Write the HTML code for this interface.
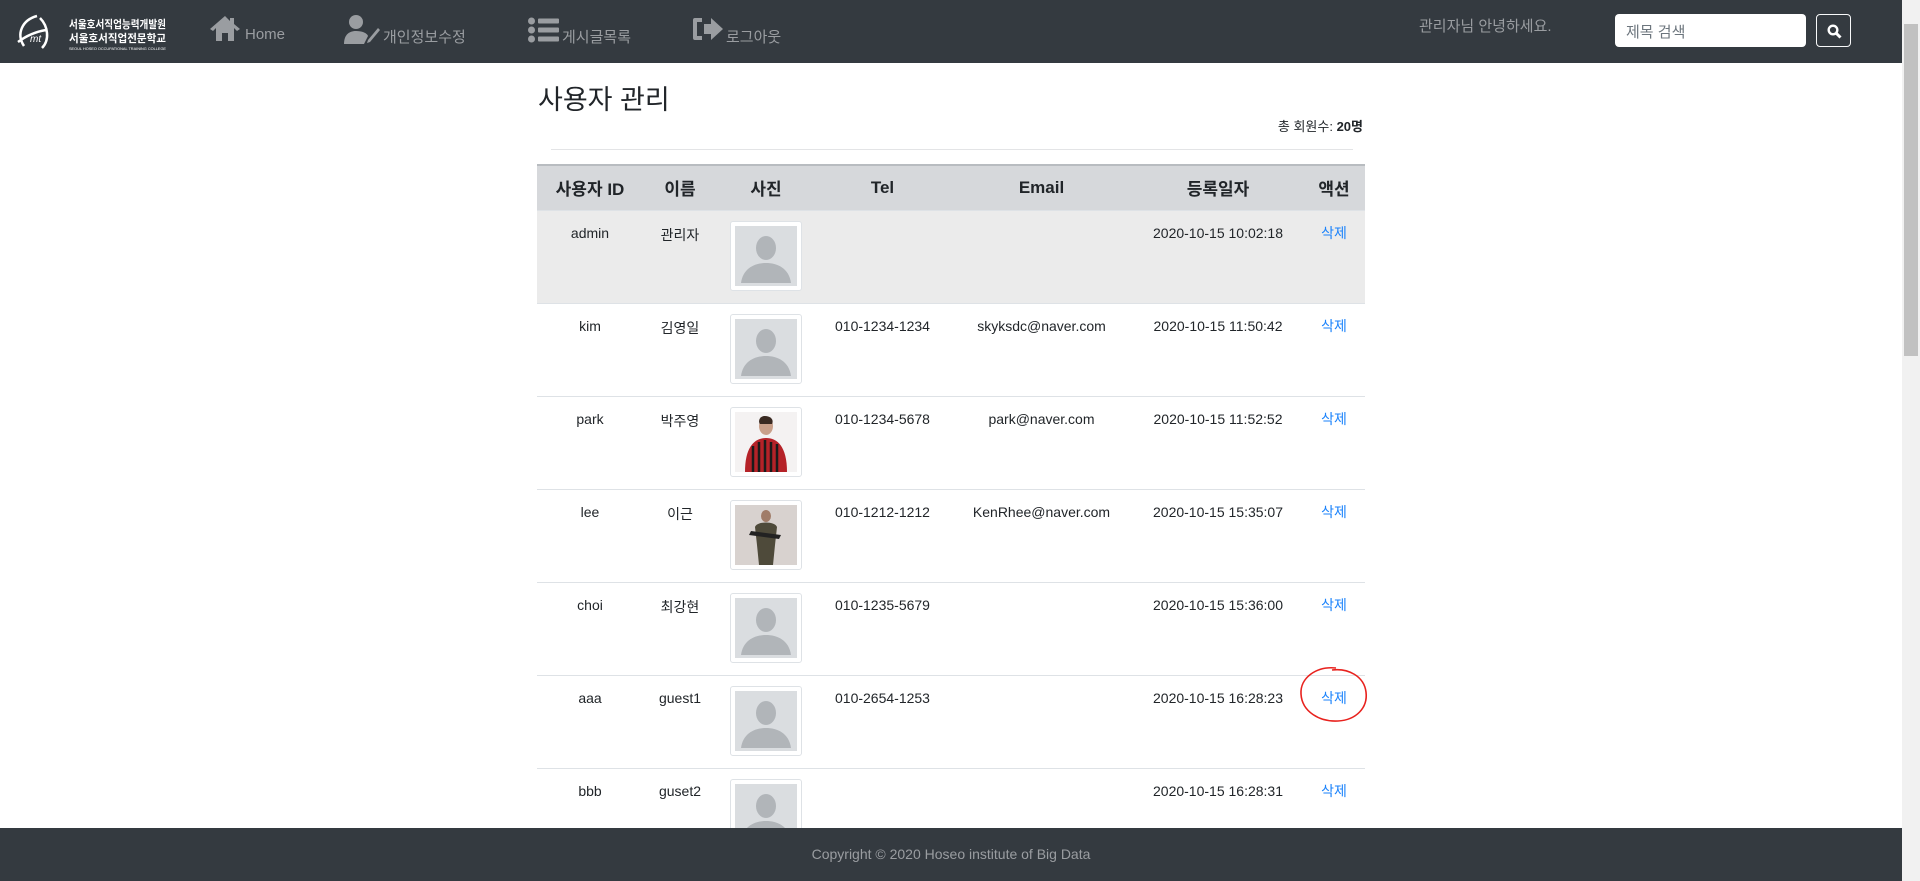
<!DOCTYPE html>
<html><head><meta charset="utf-8"><style>
*{margin:0;padding:0;box-sizing:border-box}
body{width:1920px;height:881px;overflow:hidden;background:#fff;font-family:"Liberation Sans","Noto Sans CJK KR",sans-serif;position:relative;color:#212529}
.nav{position:absolute;left:0;top:0;width:1902px;height:63px;background:#343a40}
.nt{position:absolute;color:#9a9da1;font-size:15px;top:26px}
.ic{position:absolute;fill:#9a9da1}
.scroll{position:absolute;right:0;top:0;width:18px;height:881px;background:#f1f1f1}
.thumb{position:absolute;right:2px;top:24px;width:14px;height:332px;background:#c1c1c1}
table{position:absolute;left:537px;top:164px;border-collapse:collapse;width:828px;font-size:14px}
th{height:45px;background:#d6d8db;border-top:2px solid #b8bcc0;font-size:17px;font-weight:bold;text-align:center}
td{height:93px;border-top:1px solid #dee2e6;text-align:center;vertical-align:top;padding-top:14px}
tr.act td{background:#ebebeb}
.del{color:#1a82fb;padding-top:12px}
.ph{display:inline-block;width:72px;height:70px;border:1px solid #dee2e6;border-radius:3px;background:#fff;padding:4px;margin-top:-4px}
.ph svg{display:block;width:62px;height:60px}
.foot{position:absolute;left:0;top:828px;width:1902px;height:53px;background:#343a40;color:#9a9da1;font-size:14px;text-align:center;line-height:53px}
</style></head><body>
<div class="nav">
 <svg style="position:absolute;left:12px;top:12px" width="155" height="40" viewBox="0 0 155 40">
  <path d="M25 4 C10 8 4 22 12 34 M28 6 C36 14 38 28 30 36 M6 30 C14 24 22 20 34 18" stroke="#fff" stroke-width="2.5" fill="none"/>
  <text x="18" y="30" fill="#fff" font-size="10" font-style="italic">mt</text>
  <text x="57" y="16" fill="#fff" font-size="11" font-weight="bold" font-family="Noto Sans CJK KR" textLength="97" lengthAdjust="spacingAndGlyphs">서울호서직업능력개발원</text>
  <text x="57" y="30" fill="#fff" font-size="11" font-weight="bold" font-family="Noto Sans CJK KR" textLength="97" lengthAdjust="spacingAndGlyphs">서울호서직업전문학교</text>
  <text x="57" y="38" fill="#fff" font-size="4" textLength="97" lengthAdjust="spacingAndGlyphs">SEOUL HOSEO OCCUPATIONAL TRAINING COLLEGE</text>
 </svg>
 <svg class="ic" style="left:208px;top:14px" width="34" height="28" viewBox="0 0 34 28"><path d="M17 2 L2 15 L5 17 L8 14 V27 H14 V19 H20 V27 H26 V14 L29 17 L32 15 L26 10 V4 H22 V7 Z"/></svg>
 <div class="nt" style="left:245px">Home</div>
 <svg class="ic" style="left:342px;top:14px" width="40" height="32" viewBox="0 0 40 32"><circle cx="14" cy="8" r="7"/><path d="M2 30 C2 20 8 17 14 17 C20 17 25 19 26 22 L22 30Z"/><path d="M26 26 L36 14 L38 16 L28 28 L25 29Z"/></svg>
 <div class="nt" style="left:383px">개인정보수정</div>
 <svg class="ic" style="left:528px;top:17px" width="32" height="26" viewBox="0 0 32 26"><circle cx="3.5" cy="4" r="3.5"/><circle cx="3.5" cy="13" r="3.5"/><circle cx="3.5" cy="22" r="3.5"/><rect x="10" y="1.5" width="21" height="5" rx="1"/><rect x="10" y="10.5" width="21" height="5" rx="1"/><rect x="10" y="19.5" width="21" height="5" rx="1"/></svg>
 <div class="nt" style="left:562px">게시글목록</div>
 <svg class="ic" style="left:692px;top:16px" width="32" height="26" viewBox="0 0 32 26"><path d="M10 2 H3 Q1 2 1 4 V22 Q1 24 3 24 H10 V20 H5 V6 H10Z"/><path d="M12 8 H19 V2 L31 13 L19 24 V18 H12Z"/></svg>
 <div class="nt" style="left:726px">로그아웃</div>
 <div class="nt" style="left:1419px;top:15px">관리자님 안녕하세요.</div>
 <div style="position:absolute;left:1615px;top:14px;width:191px;height:33px;background:#fff;border-radius:4px;color:#6c757d;font-size:15px;padding:7px 11px">제목 검색</div>
 <div style="position:absolute;left:1816px;top:14px;width:35px;height:33px;border:1px solid #f8f9fa;border-radius:4px"><svg style="position:absolute;left:10px;top:9px" width="15" height="15" viewBox="0 0 15 15"><circle cx="6" cy="6" r="4.3" stroke="#fff" stroke-width="2.4" fill="none"/><path d="M9 9 L13.5 13.5" stroke="#fff" stroke-width="3"/></svg></div>
</div>
<div class="scroll"><div class="thumb"></div></div>
<div style="position:absolute;left:538px;top:78px;font-size:27px">사용자 관리</div>
<div style="position:absolute;right:557px;top:116px;font-size:13px">총 회원수: <b>20명</b></div>
<div style="position:absolute;left:551px;top:149px;width:802px;height:1px;background:#e3e4e6"></div>
<table>
<colgroup><col style="width:106px"><col style="width:74px"><col style="width:98px"><col style="width:135px"><col style="width:183px"><col style="width:170px"><col style="width:62px"></colgroup>
<tr><th>사용자 ID</th><th>이름</th><th>사진</th><th>Tel</th><th>Email</th><th>등록일자</th><th>액션</th></tr>
<tr class="act"><td>admin</td><td>관리자</td><td><span class="ph"><svg viewBox="0 0 62 60"><rect width="62" height="60" fill="#dadde0"/><ellipse cx="31" cy="22" rx="10" ry="12" fill="#b1b5b9"/><path d="M6 57 C8 42 20 37 31 37 C42 37 54 42 56 57Z" fill="#b1b5b9"/></svg></span></td><td></td><td></td><td>2020-10-15 10:02:18</td><td class="del">삭제</td></tr>
<tr><td>kim</td><td>김영일</td><td><span class="ph"><svg viewBox="0 0 62 60"><rect width="62" height="60" fill="#dadde0"/><ellipse cx="31" cy="22" rx="10" ry="12" fill="#b1b5b9"/><path d="M6 57 C8 42 20 37 31 37 C42 37 54 42 56 57Z" fill="#b1b5b9"/></svg></span></td><td>010-1234-1234</td><td>skyksdc@naver.com</td><td>2020-10-15 11:50:42</td><td class="del">삭제</td></tr>
<tr><td>park</td><td>박주영</td><td><span class="ph"><svg viewBox="0 0 62 60"><rect width="62" height="60" fill="#f4f2f2"/><ellipse cx="31" cy="14" rx="7" ry="9" fill="#c9a08a"/><path d="M30 4 C24 4 23 10 25 12 L37 12 C39 8 36 4 30 4Z" fill="#3a2a22"/><path d="M10 60 C10 34 20 26 31 26 C42 26 52 34 52 60Z" fill="#b52228"/><path d="M18 34 V60 M24 30 V60 M30 28 V60 M36 30 V60 M42 32 V60" stroke="#1b1b1b" stroke-width="2.5"/></svg></span></td><td>010-1234-5678</td><td>park@naver.com</td><td>2020-10-15 11:52:52</td><td class="del">삭제</td></tr>
<tr><td>lee</td><td>이근</td><td><span class="ph"><svg viewBox="0 0 62 60"><rect width="62" height="60" fill="#d8d2cf"/><ellipse cx="31" cy="11" rx="5" ry="6" fill="#a07c68"/><path d="M20 22 C22 16 40 16 42 22 L40 40 L38 60 H24 L22 40Z" fill="#4e4a3a"/><path d="M16 26 L46 30 L44 34 L14 30Z" fill="#222"/></svg></span></td><td>010-1212-1212</td><td>KenRhee@naver.com</td><td>2020-10-15 15:35:07</td><td class="del">삭제</td></tr>
<tr><td>choi</td><td>최강현</td><td><span class="ph"><svg viewBox="0 0 62 60"><rect width="62" height="60" fill="#dadde0"/><ellipse cx="31" cy="22" rx="10" ry="12" fill="#b1b5b9"/><path d="M6 57 C8 42 20 37 31 37 C42 37 54 42 56 57Z" fill="#b1b5b9"/></svg></span></td><td>010-1235-5679</td><td></td><td>2020-10-15 15:36:00</td><td class="del">삭제</td></tr>
<tr><td>aaa</td><td>guest1</td><td><span class="ph"><svg viewBox="0 0 62 60"><rect width="62" height="60" fill="#dadde0"/><ellipse cx="31" cy="22" rx="10" ry="12" fill="#b1b5b9"/><path d="M6 57 C8 42 20 37 31 37 C42 37 54 42 56 57Z" fill="#b1b5b9"/></svg></span></td><td>010-2654-1253</td><td></td><td>2020-10-15 16:28:23</td><td class="del">삭제</td></tr>
<tr><td>bbb</td><td>guset2</td><td><span class="ph"><svg viewBox="0 0 62 60"><rect width="62" height="60" fill="#dadde0"/><ellipse cx="31" cy="22" rx="10" ry="12" fill="#b1b5b9"/><path d="M6 57 C8 42 20 37 31 37 C42 37 54 42 56 57Z" fill="#b1b5b9"/></svg></span></td><td></td><td></td><td>2020-10-15 16:28:31</td><td class="del">삭제</td></tr>
</table>
<svg style="position:absolute;left:1296px;top:664px" width="76" height="62" viewBox="0 0 76 62"><path d="M40 4 C20 2 4 14 5 30 C6 48 24 58 42 57 C60 56 72 44 70 28 C68 12 52 4 36 6" stroke="#e8221e" stroke-width="1.6" fill="none"/></svg>
<div class="foot">Copyright © 2020 Hoseo institute of Big Data</div>
</body></html>
